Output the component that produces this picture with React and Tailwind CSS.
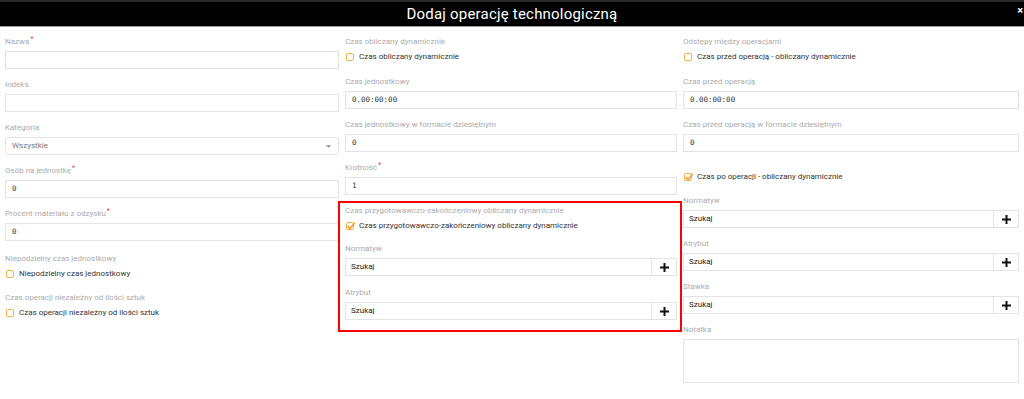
import React from "react";

const Label = ({ children, req }) => (
  <div className="h-[12px] leading-[12px] text-[8px] text-[#ababab] whitespace-nowrap">
    {children}
    {req && <span className="relative top-[-3px] ml-[1px] text-[7px] text-[#e53935]">*</span>}
  </div>
);

const Input = ({ value }) => (
  <div className="mt-[3px] flex h-[18px] items-center border border-[#e3e3e3] bg-white pl-[6px] font-['DejaVu_Sans_Mono',monospace] text-[7.5px] text-[#333]">
    {value}
  </div>
);

const Field = ({ label, req, value, className = "" }) => (
  <div className={className}>
    <Label req={req}>{label}</Label>
    <Input value={value} />
  </div>
);

const Check = ({ checked, children, className = "" }) => (
  <div className={"flex h-[14px] items-center gap-[5px] " + className}>
    <span className="relative ml-[1px] h-[8px] w-[8px] shrink-0 rounded-[2px] border border-[#f5b041] bg-white">
      {checked && (
        <svg className="absolute left-[-1px] top-[-2px]" width="10" height="10" viewBox="0 0 10 10">
          <path d="M1.6 5.2 L4 7.6 L8.8 1.8" fill="none" stroke="#f0a030" strokeWidth="1.7" />
        </svg>
      )}
    </span>
    <span className="whitespace-nowrap text-[8px] text-[#333]">{children}</span>
  </div>
);

const Plus = () => (
  <svg width="9" height="9" viewBox="0 0 9 9">
    <path d="M3.5 0h2v3.5H9v2H5.5V9h-2V5.5H0v-2h3.5z" fill="#111" />
  </svg>
);

const Search = ({ label, className = "" }) => (
  <div className={className}>
    <Label>{label}</Label>
    <div className="mt-[3px] flex h-[18px]">
      <div className="flex flex-1 items-center border border-[#e3e3e3] bg-white pl-[5px] text-[8px] text-[#222]">
        Szukaj
      </div>
      <div className="flex w-[25px] items-center justify-center border border-l-0 border-[#e3e3e3] bg-white">
        <Plus />
      </div>
    </div>
  </div>
);

export default function App() {
  return (
    <div className="h-[399px] w-[1024px] overflow-hidden bg-white font-['Roboto',sans-serif]">
      <div className="relative flex h-[27px] items-center justify-center border-t-2 border-b border-t-[#2b2b2b] border-b-[#9a9a9a] bg-black">
        <span className="text-[15px] leading-none tracking-[0.2px] text-white">Dodaj operację technologiczną</span>
        <span className="absolute right-[1px] top-[3px] text-[11px] font-bold leading-none text-white">×</span>
      </div>

      <div className="grid grid-cols-[334px_332px_336px] gap-x-[6px] px-[5px] pt-[9px]">
        {/* Left column */}
        <div>
          <Field label="Nazwa" req value="" className="mb-[10px]" />
          <Field label="Indeks" value="" className="mb-[10px]" />
          <div className="mb-[10px]">
            <Label>Kategoria</Label>
            <div className="mt-[3px] flex h-[18px] items-center justify-between rounded-[3px] border border-[#e3e3e3] bg-white pl-[6px] pr-[7px]">
              <span className="text-[8px] text-[#777]">Wszystkie</span>
              <svg width="5" height="3" viewBox="0 0 5 3">
                <path d="M0 0h5L2.5 3z" fill="#9a9a9a" />
              </svg>
            </div>
          </div>
          <Field label="Osób na jednostkę" req value="0" className="mb-[10px]" />
          <Field label="Procent materiału z odzysku" req value="0" className="mb-[12px]" />
          <Label>Niepodzielny czas jednostkowy</Label>
          <Check className="mb-[11px] mt-[2px]">Niepodzielny czas jednostkowy</Check>
          <Label>Czas operacji niezależny od ilości sztuk</Label>
          <Check className="mt-[2px]">Czas operacji niezależny od ilości sztuk</Check>
        </div>

        {/* Middle column */}
        <div>
          <Label>Czas obliczany dynamicznie</Label>
          <Check className="mb-[12px] mt-[2px]">Czas obliczany dynamicznie</Check>
          <Field label="Czas jednostkowy" value="0.00:00:00" className="mb-[10px]" />
          <Field label="Czas jednostkowy w formacie dziesiętnym" value="0" className="mb-[10px]" />
          <Field label="Krotność" req value="1" />
          <div className="-ml-[7px] -mr-[5px] mt-[6px] border-2 border-[#ff0000] pb-[10px] pl-[5px] pr-[3px] pt-[2px]">
            <Label>Czas przygotowawczo-zakończeniowy obliczany dynamicznie</Label>
            <Check checked className="mb-[10px] mt-[2px]">
              Czas przygotowawczo-zakończeniowy obliczany dynamicznie
            </Check>
            <Search label="Normatyw" className="mb-[11px]" />
            <Search label="Atrybut" />
          </div>
        </div>

        {/* Right column */}
        <div>
          <Label>Odstępy między operacjami</Label>
          <Check className="mb-[12px] mt-[2px]">Czas przed operacją - obliczany dynamicznie</Check>
          <Field label="Czas przed operacją" value="0.00:00:00" className="mb-[10px]" />
          <Field label="Czas przed operacją w formacie dziesiętnym" value="0" />
          <Check checked className="mt-[18px]">Czas po operacji - obliczany dynamicznie</Check>
          <Search label="Normatyw" className="mb-[10px] mt-[11px]" />
          <Search label="Atrybut" className="mb-[10px]" />
          <Search label="Stawka" className="mb-[10px]" />
          <Label>Notatka</Label>
          <div className="mt-[3px] h-[44px] border border-[#e3e3e3] bg-white" />
        </div>
      </div>
    </div>
  );
}
